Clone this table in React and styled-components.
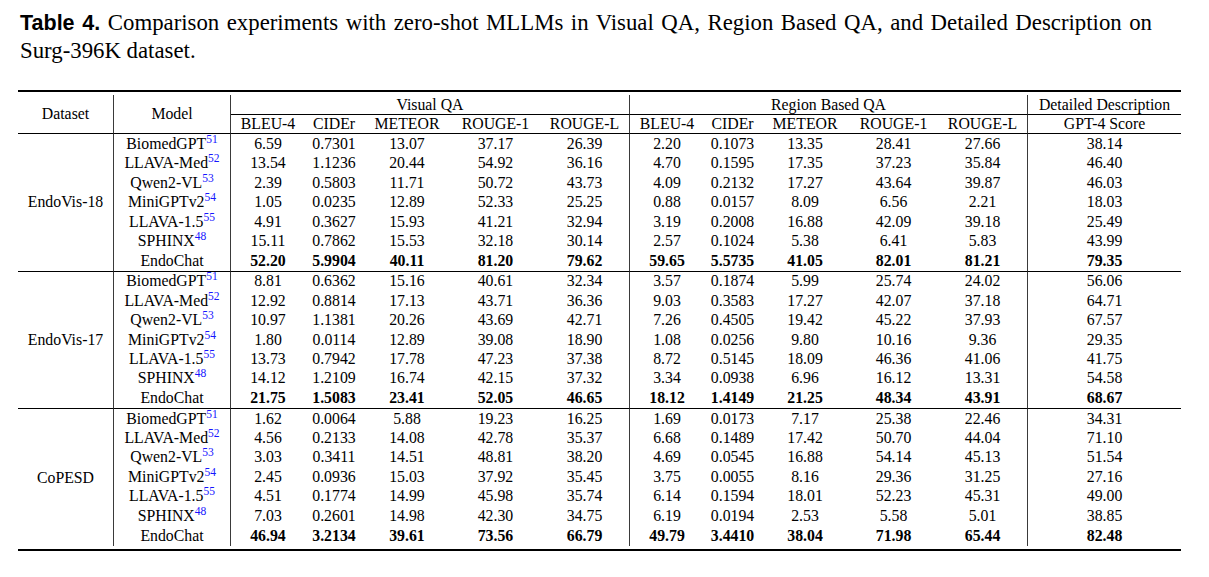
import React from 'react';
import styled, { createGlobalStyle } from 'styled-components';

const GlobalStyle = createGlobalStyle`
  html, body {
    margin: 0;
    padding: 0;
    background: #fff;
  }
  body {
    font-family: 'Liberation Serif', 'Times New Roman', serif;
    color: #000;
  }
`;

const Page = styled.div`
  padding: 9px 0 0 18px;
  width: 1163px;
`;

const Caption = styled.div`
  font-family: 'Liberation Serif', serif;
  font-size: 22.8px;
  line-height: 28px;
  padding-left: 2px;
  width: 1132px;
`;

const CaptionLine = styled.div`
  white-space: nowrap;
  text-align: ${(p) => (p.$justify ? 'justify' : 'left')};
  text-align-last: ${(p) => (p.$justify ? 'justify' : 'auto')};
`;

const Label = styled.span`
  font-family: 'Liberation Sans', Arial, sans-serif;
  font-weight: 700;
  font-size: 21.5px;
`;

const TableFrame = styled.div`
  margin-top: 25px;
  border-top: 2px solid #000;
  border-bottom: 2px solid #000;
  padding: 3px 0;
`;

const Table = styled.table`
  width: 1163px;
  table-layout: fixed;
  border-collapse: separate;
  border-spacing: 0;
  font-family: 'Liberation Serif', serif;
  font-size: 15.8px;
`;

const Cell = styled.td`
  padding: 0;
  text-align: center;
  vertical-align: middle;
  white-space: nowrap;
  line-height: 18px;
  height: ${(p) => p.$h || 19.4}px;
  font-weight: ${(p) => (p.$bold ? 700 : 400)};
  border-right: ${(p) => (p.$vr ? '1px solid #3a3a3a' : 'none')};
  border-bottom: ${(p) => (p.$hb ? '1px solid #000' : 'none')};
  box-sizing: border-box;
`;

const Ref = styled.sup`
  color: #1515ff;
  font-size: 11.5px;
  line-height: 0;
  vertical-align: 6px;
`;

const widths = [96, 117, 74, 58, 88, 89, 90, 74, 57, 88, 89, 90, 153];
const metrics = ['BLEU-4', 'CIDEr', 'METEOR', 'ROUGE-1', 'ROUGE-L'];

const groups = [
  {
    name: 'EndoVis-18',
    rows: [
      ['BiomedGPT', '51', '6.59 0.7301 13.07 37.17 26.39 2.20 0.1073 13.35 28.41 27.66 38.14'],
      ['LLAVA-Med', '52', '13.54 1.1236 20.44 54.92 36.16 4.70 0.1595 17.35 37.23 35.84 46.40'],
      ['Qwen2-VL', '53', '2.39 0.5803 11.71 50.72 43.73 4.09 0.2132 17.27 43.64 39.87 46.03'],
      ['MiniGPTv2', '54', '1.05 0.0235 12.89 52.33 25.25 0.88 0.0157 8.09 6.56 2.21 18.03'],
      ['LLAVA-1.5', '55', '4.91 0.3627 15.93 41.21 32.94 3.19 0.2008 16.88 42.09 39.18 25.49'],
      ['SPHINX', '48', '15.11 0.7862 15.53 32.18 30.14 2.57 0.1024 5.38 6.41 5.83 43.99'],
      ['EndoChat', null, '52.20 5.9904 40.11 81.20 79.62 59.65 5.5735 41.05 82.01 81.21 79.35'],
    ],
  },
  {
    name: 'EndoVis-17',
    rows: [
      ['BiomedGPT', '51', '8.81 0.6362 15.16 40.61 32.34 3.57 0.1874 5.99 25.74 24.02 56.06'],
      ['LLAVA-Med', '52', '12.92 0.8814 17.13 43.71 36.36 9.03 0.3583 17.27 42.07 37.18 64.71'],
      ['Qwen2-VL', '53', '10.97 1.1381 20.26 43.69 42.71 7.26 0.4505 19.42 45.22 37.93 67.57'],
      ['MiniGPTv2', '54', '1.80 0.0114 12.89 39.08 18.90 1.08 0.0256 9.80 10.16 9.36 29.35'],
      ['LLAVA-1.5', '55', '13.73 0.7942 17.78 47.23 37.38 8.72 0.5145 18.09 46.36 41.06 41.75'],
      ['SPHINX', '48', '14.12 1.2109 16.74 42.15 37.32 3.34 0.0938 6.96 16.12 13.31 54.58'],
      ['EndoChat', null, '21.75 1.5083 23.41 52.05 46.65 18.12 1.4149 21.25 48.34 43.91 68.67'],
    ],
  },
  {
    name: 'CoPESD',
    rows: [
      ['BiomedGPT', '51', '1.62 0.0064 5.88 19.23 16.25 1.69 0.0173 7.17 25.38 22.46 34.31'],
      ['LLAVA-Med', '52', '4.56 0.2133 14.08 42.78 35.37 6.68 0.1489 17.42 50.70 44.04 71.10'],
      ['Qwen2-VL', '53', '3.03 0.3411 14.51 48.81 38.20 4.69 0.0545 16.88 54.14 45.13 51.54'],
      ['MiniGPTv2', '54', '2.45 0.0936 15.03 37.92 35.45 3.75 0.0055 8.16 29.36 31.25 27.16'],
      ['LLAVA-1.5', '55', '4.51 0.1774 14.99 45.98 35.74 6.14 0.1594 18.01 52.23 45.31 49.00'],
      ['SPHINX', '48', '7.03 0.2601 14.98 42.30 34.75 6.19 0.0194 2.53 5.58 5.01 38.85'],
      ['EndoChat', null, '46.94 3.2134 39.61 73.56 66.79 49.79 3.4410 38.04 71.98 65.44 82.48'],
    ],
  },
];

const Group = ({ group, last }) => (
  <tbody>
    {group.rows.map(([model, ref, values], i) => {
      const end = i === group.rows.length - 1;
      const line = end && !last;
      const h = end ? 21 : 19.4;
      const bold = model === 'EndoChat';
      return (
        <tr key={model}>
          {i === 0 && (
            <Cell rowSpan={group.rows.length} $vr $hb={!last}>
              {group.name}
            </Cell>
          )}
          <Cell $h={h} $vr $hb={line}>
            {model}
            {ref && <Ref>{ref}</Ref>}
          </Cell>
          {values.split(' ').map((v, j) => (
            <Cell key={j} $h={h} $bold={bold} $vr={j === 4 || j === 9} $hb={line}>
              {v}
            </Cell>
          ))}
        </tr>
      );
    })}
  </tbody>
);

const App = () => (
  <Page>
    <GlobalStyle />
    <Caption>
      <CaptionLine $justify>
        <Label>Table 4.</Label> Comparison experiments with zero-shot MLLMs in Visual QA, Region Based QA, and
        Detailed Description on
      </CaptionLine>
      <CaptionLine>Surg-396K dataset.</CaptionLine>
    </Caption>
    <TableFrame>
      <Table>
        <colgroup>
          {widths.map((w, i) => (
            <col key={i} style={{ width: w }} />
          ))}
        </colgroup>
        <thead>
          <tr>
            <Cell rowSpan={2} $vr $hb>
              Dataset
            </Cell>
            <Cell rowSpan={2} $vr $hb>
              Model
            </Cell>
            <Cell colSpan={5} $h={20.3} $vr $hb>
              Visual QA
            </Cell>
            <Cell colSpan={5} $h={20.3} $vr $hb>
              Region Based QA
            </Cell>
            <Cell $h={20.3} $hb>
              Detailed Description
            </Cell>
          </tr>
          <tr>
            {metrics.map((m, i) => (
              <Cell key={'v' + m} $h={19} $vr={i === 4} $hb>
                {m}
              </Cell>
            ))}
            {metrics.map((m, i) => (
              <Cell key={'r' + m} $h={19} $vr={i === 4} $hb>
                {m}
              </Cell>
            ))}
            <Cell $h={19} $hb>
              GPT-4 Score
            </Cell>
          </tr>
        </thead>
        {groups.map((g, i) => (
          <Group key={g.name} group={g} last={i === groups.length - 1} />
        ))}
      </Table>
    </TableFrame>
  </Page>
);

export default App;
